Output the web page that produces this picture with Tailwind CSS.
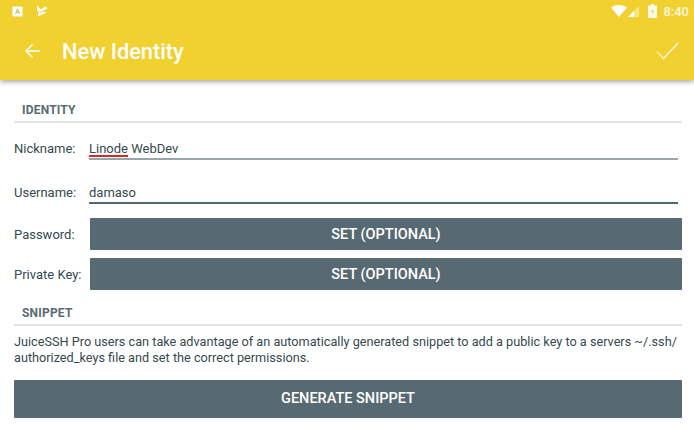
<!DOCTYPE html>
<html lang="en">
<head>
    <meta charset="UTF-8">
    <meta name="viewport" content="width=device-width, initial-scale=1.0">
    <title>New Identity</title>
    <script src="https://cdn.jsdelivr.net/npm/@tailwindcss/browser@4"></script>
</head>
<body class="w-[694px] h-[425px] overflow-hidden bg-white font-['Roboto',sans-serif] text-[#35494f]">

    <!-- app bar with status bar -->
    <header class="h-[80px] bg-[#f1d130] shadow-[0_2px_5px_rgba(0,0,0,0.35)] text-white relative z-10">
        <div class="h-[22px] flex items-center pl-[12px] pr-[5px]">
            <svg class="w-[11px] h-[11px]" viewBox="0 0 11 11"><rect x="0.5" y="0.5" width="10" height="10" rx="1" fill="#fff"/><path d="M3.5 8 L5.5 3 L7.5 8 M4.3 6.3 H6.7" stroke="#c9b54a" stroke-width="1" fill="none"/></svg>
            <svg class="w-[12px] h-[12px] ml-[13px]" viewBox="0 0 12 12"><path d="M1 0 L4.5 4.5 L9.5 1.5 L11.5 3 L7 6.5 L11 7.5 L1.5 11.5 L3 7 L1 6 Z" fill="#fff"/><path d="M3.5 5.5 L5 7.5 L8 4.5" stroke="#f1d130" stroke-width="1" fill="none"/></svg>
            <div class="ml-auto flex items-center">
                <svg class="w-[16px] h-[12px]" viewBox="0 0 16 12"><path d="M0 2.5 C4.5 -0.8 11.5 -0.8 16 2.5 L8 12 Z" fill="#fff"/></svg>
                <svg class="w-[11px] h-[11px] ml-[1px]" viewBox="0 0 11 11"><path d="M0 11 L11 0 V11 Z" fill="#fff" fill-opacity="0.45"/><path d="M0 11 L6 5 V11 Z" fill="#fff"/></svg>
                <svg class="w-[9px] h-[14px] ml-[9px]" viewBox="0 0 9 14"><path d="M3 0 H6 V1.5 H9 V14 H0 V1.5 H3 Z" fill="#fff" fill-opacity="0.9"/><path d="M5.2 4 L3 8 H4.4 L3.8 11 L6 7 H4.6 Z" fill="#f1d130"/></svg>
                <span class="ml-[6px] text-[13px] leading-none font-medium text-white/85">8:40</span>
            </div>
        </div>
        <div class="h-[58px] flex items-center pl-[24px] pr-[15px]">
            <svg class="w-[17px] h-[16px]" viewBox="0 0 17 16" fill="none" stroke="#fff" stroke-width="1.4"><path d="M16 8 H2 M8.5 1.5 L2 8 L8.5 14.5"/></svg>
            <h1 class="ml-[21px] pt-[2px] text-[21.8px] font-medium leading-none">New Identity</h1>
            <svg class="ml-auto w-[23px] h-[18px]" viewBox="0 0 23 18" fill="none" stroke="#fff" stroke-width="1.1"><path d="M1 9.5 L7.5 16.5 L22 1"/></svg>
        </div>
    </header>

    <main class="pl-[14px] pr-[12px]">
        <section class="pt-[23px]">
            <h2 class="pl-[8px] text-[12px] leading-[14px] font-bold text-[#5a6b72] tracking-[0.2px]">IDENTITY</h2>
            <div class="mt-[4px] h-[2px] bg-[#e2e4e4]"></div>
        </section>

        <div class="mt-[17px] flex h-[20px] text-[13px]">
            <label class="w-[75px] leading-[18px]">Nickname:</label>
            <div class="flex-1 mr-[4px] border-b-2 border-[#9aa5a8] leading-[18px] text-[13px]">
                <span class="inline-block h-[17px] border-b-2 border-[#d8262c]">Linode</span> WebDev
            </div>
        </div>
        <div class="mt-[24px] flex h-[20px] text-[13px]">
            <label class="w-[75px] leading-[18px]">Username:</label>
            <div class="flex-1 mr-[4px] border-b-2 border-[#55676e] leading-[18px]">damaso</div>
        </div>

        <div class="mt-[14px] flex items-center h-[32px] text-[13px]">
            <label class="w-[76px] pt-[1px]">Password:</label>
            <button class="flex-1 h-full pt-[1px] rounded-[1px] bg-[#586a71] text-white text-[14.5px] font-medium">SET (OPTIONAL)</button>
        </div>
        <div class="mt-[8px] flex items-center h-[32px] text-[13px]">
            <label class="w-[76px] pt-[1px]">Private Key:</label>
            <button class="flex-1 h-full pt-[1px] rounded-[1px] bg-[#586a71] text-white text-[14.5px] font-medium">SET (OPTIONAL)</button>
        </div>

        <section class="mt-[16px]">
            <h2 class="pl-[8px] text-[12px] leading-[14px] font-bold text-[#5a6b72] tracking-[0.2px]">SNIPPET</h2>
            <div class="mt-[4px] h-[2px] bg-[#e2e4e4]"></div>
        </section>

        <p class="mt-[8px] text-[12.7px] leading-[16px] w-[670px]">JuiceSSH Pro users can take advantage of an automatically generated snippet to add a public key to a servers ~/.ssh/ authorized_keys file and set the correct permissions.</p>

        <button class="mt-[14px] w-full h-[38px] rounded-[1px] bg-[#586a71] text-white text-[14.5px] font-medium">GENERATE SNIPPET</button>
    </main>
</body>
</html>
